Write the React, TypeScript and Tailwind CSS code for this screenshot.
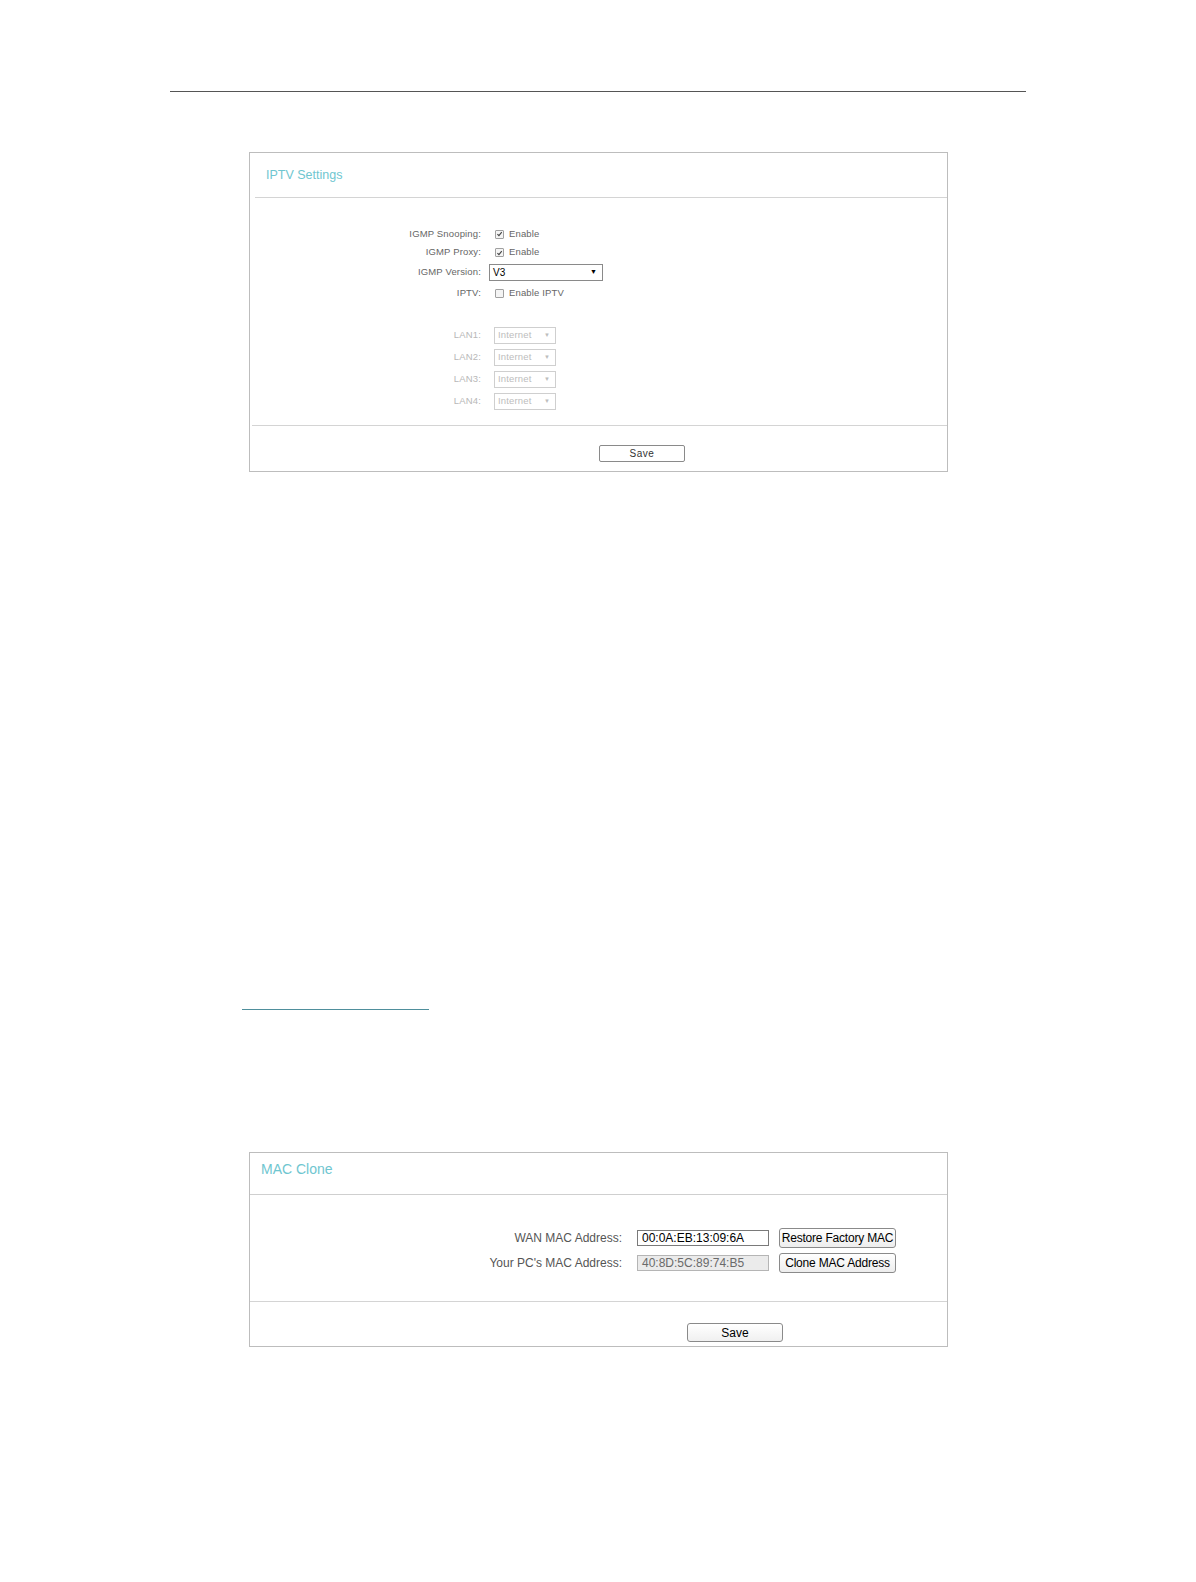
import React from 'react';

const font = { fontFamily: '"Liberation Sans", Arial, sans-serif' };

function Check({ checked }: { checked: boolean }) {
  return (
    <span className="ml-[6px] inline-flex items-center justify-center w-[9px] h-[9px] border border-[#a0a0a0] bg-[#f4f4f4] rounded-[1px]">
      {checked && (
        <svg viewBox="0 0 10 10" className="w-[8px] h-[8px]">
          <path d="M2 5.2 L4.2 7.4 L8.2 2.4" fill="none" stroke="#444" strokeWidth={1.6} />
        </svg>
      )}
    </span>
  );
}

function IptvRow({ label, h, children, muted }: { label: string; h: string; children: React.ReactNode; muted?: boolean }) {
  return (
    <div className={`flex items-center ${h}`}>
      <div className={`w-[231px] text-right ${muted ? 'text-[#b8b8b8]' : 'text-[#666]'}`}>{label}</div>
      <div className="ml-[8px] flex items-center">{children}</div>
    </div>
  );
}

function LanSelect() {
  return (
    <div className="ml-[5px] w-[62px] h-[17px] border border-[#cfcfcf] flex items-center justify-between pl-[3px] pr-[5px] text-[#bdbdbd]">
      <span>Internet</span>
      <span className="text-[6px]">▼</span>
    </div>
  );
}

function MacButton({ children }: { children: React.ReactNode }) {
  return (
    <button className="w-[117px] h-[20px] px-0 whitespace-nowrap border border-[#8a8a8a] rounded-[3px] bg-gradient-to-b from-white to-[#ededed] text-[12px] tracking-[-0.2px] text-black leading-none">
      {children}
    </button>
  );
}

export default function App() {
  return (
    <div className="bg-white pt-[91px] pb-[200px]" style={font}>
      <div className="ml-[170px] w-[856px] h-px bg-[#555]" />

      {/* IPTV Settings */}
      <div className="ml-[249px] mt-[60px] w-[699px] h-[320px] border border-[#bdbdbd] flex flex-col text-[9.5px] tracking-[0.15px]">
        <div className="h-[44px] shrink-0 flex items-center pl-[16px] text-[12.5px] text-[#6fc6d0] tracking-normal">IPTV Settings</div>
        <div className="ml-[5px] border-t border-[#d4d4d4]" />
        <div className="pt-[27px] pb-[13px]">
          <IptvRow label="IGMP Snooping:" h="h-[18px]">
            <Check checked />
            <span className="ml-[5px] text-[#666]">Enable</span>
          </IptvRow>
          <IptvRow label="IGMP Proxy:" h="h-[19px]">
            <Check checked />
            <span className="ml-[5px] text-[#666]">Enable</span>
          </IptvRow>
          <IptvRow label="IGMP Version:" h="h-[20px]">
            <div className="w-[114px] h-[17px] border border-[#8a8a8a] flex items-center justify-between pl-[3px] pr-[5px] text-black text-[10px] tracking-normal">
              <span>V3</span>
              <span className="text-[7px]">▼</span>
            </div>
          </IptvRow>
          <IptvRow label="IPTV:" h="h-[22px]">
            <Check checked={false} />
            <span className="ml-[5px] text-[#666]">Enable IPTV</span>
          </IptvRow>
          <div className="mt-[20px]">
            {['LAN1:', 'LAN2:', 'LAN3:', 'LAN4:'].map((l) => (
              <IptvRow key={l} label={l} h="h-[22px]" muted>
                <LanSelect />
              </IptvRow>
            ))}
          </div>
        </div>
        <div className="ml-[2px] border-t border-[#d4d4d4]" />
        <div className="flex pt-[19px] pl-[349px]">
          <button className="w-[86px] h-[17px] px-0 border border-[#8a8a8a] rounded-[2px] bg-white text-[10px] text-[#333] leading-none tracking-[0.5px]">
            Save
          </button>
        </div>
      </div>

      <div className="ml-[242px] mt-[537px] w-[187px] h-px bg-[#4f8f9c]" />

      {/* MAC Clone */}
      <div className="ml-[249px] mt-[142px] w-[699px] h-[195px] border border-[#bdbdbd] flex flex-col">
        <div className="h-[41px] shrink-0 pl-[11px] pt-[6px] text-[14px] text-[#6fc6d0]">MAC Clone</div>
        <div className="border-t border-[#cfcfcf]" />
        <div className="pt-[30px] pb-[26px] text-[12px] text-[#555]">
          <div className="flex items-center h-[25px]">
            <div className="w-[372px] text-right">WAN MAC Address:</div>
            <div className="ml-[15px] w-[132px] h-[16px] border border-[#7a7a7a] flex items-center pl-[4px] text-black">00:0A:EB:13:09:6A</div>
            <div className="ml-[10px]"><MacButton>Restore Factory MAC</MacButton></div>
          </div>
          <div className="flex items-center h-[25px]">
            <div className="w-[372px] text-right">Your PC's MAC Address:</div>
            <div className="ml-[15px] w-[132px] h-[16px] border border-[#b5b5b5] bg-[#ebebeb] flex items-center pl-[4px] text-[#6a6a6a]">40:8D:5C:89:74:B5</div>
            <div className="ml-[10px]"><MacButton>Clone MAC Address</MacButton></div>
          </div>
        </div>
        <div className="border-t border-[#d4d4d4]" />
        <div className="flex pt-[21px] pl-[437px]">
          <button className="w-[96px] h-[19px] px-0 border border-[#8a8a8a] rounded-[3px] bg-gradient-to-b from-white to-[#f0f0f0] text-[12px] text-black leading-none">
            Save
          </button>
        </div>
      </div>
    </div>
  );
}
